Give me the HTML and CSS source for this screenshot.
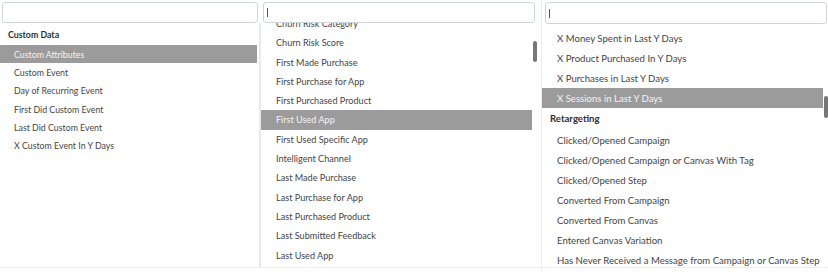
FILE: index.html
```html
<!DOCTYPE html>
<html lang="en">
<head>
    <meta charset="UTF-8">
    <title>Filter Pickers</title>
    <link rel="stylesheet" href="styles.css">
</head>
<body>

    <!-- Picker 1: Custom Data -->
    <div class="picker picker-a">
        <div class="search"></div>
        <div class="list">
            <ul class="options">
                <li class="group">Custom Data</li>
                <li class="active">Custom Attributes</li>
                <li>Custom Event</li>
                <li>Day of Recurring Event</li>
                <li>First Did Custom Event</li>
                <li>Last Did Custom Event</li>
                <li>X Custom Event In Y Days</li>
            </ul>
        </div>
    </div>

    <!-- Picker 2: scrolled part way -->
    <div class="picker picker-b">
        <div class="search"><span class="caret"></span></div>
        <div class="list">
            <ul class="options">
                <li>Churn Risk Category</li>
                <li>Churn Risk Score</li>
                <li>First Made Purchase</li>
                <li>First Purchase for App</li>
                <li>First Purchased Product</li>
                <li class="active">First Used App</li>
                <li>First Used Specific App</li>
                <li>Intelligent Channel</li>
                <li>Last Made Purchase</li>
                <li>Last Purchase for App</li>
                <li>Last Purchased Product</li>
                <li>Last Submitted Feedback</li>
                <li>Last Used App</li>
            </ul>
            <div class="scrollbar"><span class="thumb"></span></div>
        </div>
    </div>

    <!-- Picker 3: Retargeting -->
    <div class="picker picker-c">
        <div class="search"><span class="caret"></span></div>
        <div class="list">
            <ul class="options">
                <li>X Money Spent in Last Y Days</li>
                <li>X Product Purchased In Y Days</li>
                <li>X Purchases in Last Y Days</li>
                <li class="active">X Sessions in Last Y Days</li>
                <li class="group">Retargeting</li>
                <li>Clicked/Opened Campaign</li>
                <li>Clicked/Opened Campaign or Canvas With Tag</li>
                <li>Clicked/Opened Step</li>
                <li>Converted From Campaign</li>
                <li>Converted From Canvas</li>
                <li>Entered Canvas Variation</li>
                <li>Has Never Received a Message from Campaign or Canvas Step</li>
            </ul>
            <div class="scrollbar"><span class="thumb"></span></div>
        </div>
    </div>

</body>
</html>
```

FILE: styles.css
```css
/* Reset */
* {
    margin: 0;
    padding: 0;
    box-sizing: border-box;
}

body {
    display: flex;
    height: 272px;
    overflow: hidden;
    background: #fff;
    color: #454545;
    font-family: "Lato", "Liberation Sans", sans-serif;
}

/* Picker column */
.picker {
    display: flex;
    flex-direction: column;
    height: 272px;
    flex: none;
}

/* Search box */
.search {
    display: flex;
    align-items: center;
    flex: none;
    margin-top: 2px;
    height: 21px;
    border: 1px solid #cdd6df;
    border-radius: 3px;
    background: #fff;
}

.caret {
    width: 1px;
    height: 9px;
    margin-left: 3px;
    background: #555;
}

/* Option list */
.list {
    display: flex;
    flex: 1;
    overflow: hidden;
    margin-bottom: 4px;
    border-bottom: 1px solid #eee;
}

.options {
    list-style: none;
    flex: none;
}

.options li {
    display: flex;
    align-items: center;
    white-space: nowrap;
}

.options li.active {
    background: #9b9b9b;
    color: #f4f4f4;
}

.options li.group {
    color: #2f2f2f;
    font-weight: 700;
}

.scrollbar {
    flex: none;
}

.thumb {
    display: block;
    border-radius: 2px;
    background: #777;
}

/* Picker 1 */
.picker-a {
    width: 260px;
}

.picker-a .search {
    margin-left: 2px;
    width: 256px;
}

.picker-a .list {
    border-right: 1px solid #e6e6e6;
}

.picker-a .options {
    width: 257px;
    font-size: 8.8px;
}

.picker-a .options li {
    height: 18.3px;
    padding-left: 14px;
}

.picker-a .options li.group {
    height: 22px;
    padding-left: 8px;
}

/* Picker 2 */
.picker-b {
    width: 281px;
}

.picker-b .search {
    margin-left: 3px;
    width: 272px;
}

.picker-b .list {
    border-left: 1px solid #ececec;
}

.picker-b .options {
    width: 271px;
    margin-top: -9.2px;
    font-size: 9.1px;
}

.picker-b .options li {
    height: 19.3px;
    padding-left: 15px;
}

.picker-b .scrollbar {
    width: 9px;
    padding: 18px 0 0 1px;
}

.picker-b .thumb {
    width: 4px;
    height: 21px;
}

/* Picker 3 */
.picker-c {
    width: 287px;
    border-left: 1px solid #ececec;
}

.picker-c .search {
    margin-left: 3px;
    width: 282px;
    height: 22px;
}

.picker-c .list {
    padding-top: 4px;
}

.picker-c .options {
    width: 281px;
    font-size: 9.6px;
}

.picker-c .options li {
    height: 20px;
    padding-left: 15px;
}

.picker-c .options li.group {
    height: 22px;
    padding-left: 8px;
    padding-bottom: 2px;
}

.picker-c .scrollbar {
    width: 5px;
    padding: 68px 0 0 1px;
}

.picker-c .thumb {
    width: 3.5px;
    height: 22px;
}
```
